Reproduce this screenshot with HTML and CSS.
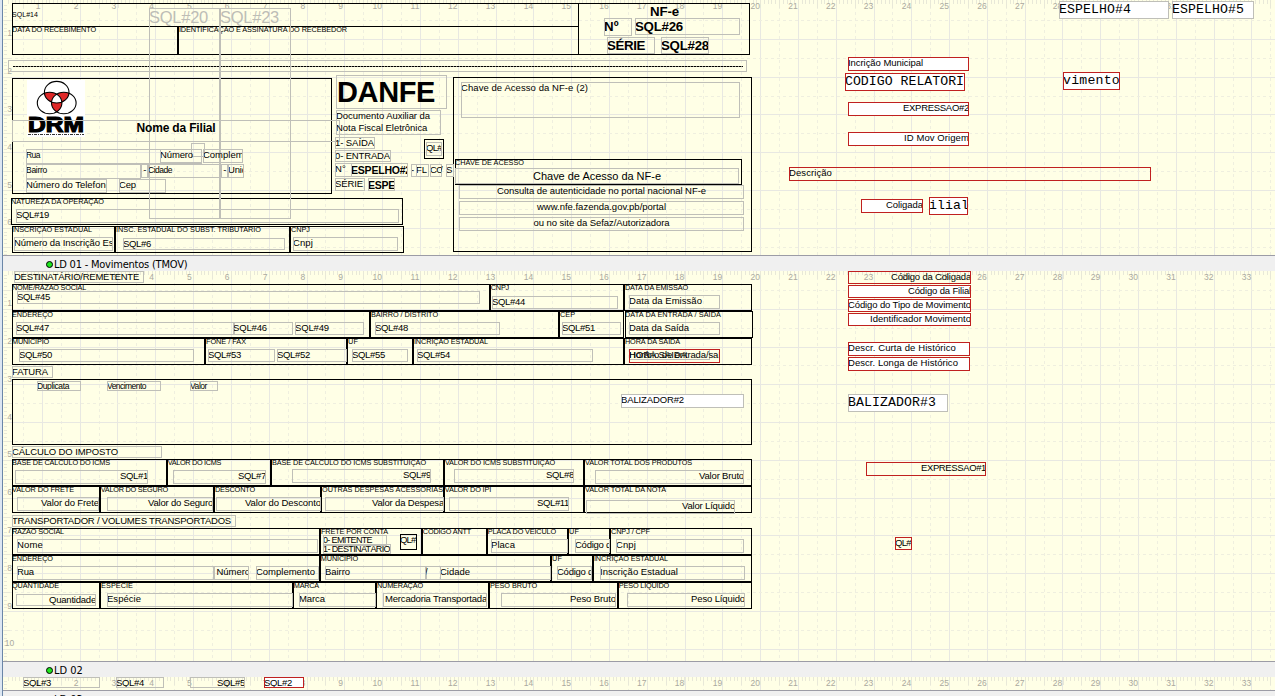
FILE: index.html
```html
<!DOCTYPE html>
<html lang="pt-BR">
<head>
<meta charset="utf-8">
<title>DANFE - Editor de relatório</title>
<link rel="stylesheet" href="styles.css">
</head>
<body>
<div class="designer">
  <div class="edge"></div>
  <main class="bands">
    <section class="band band-header" id="band-header">
      <svg class="logo" viewBox="0 0 58 57" width="58" height="57">
        <defs>
          <clipPath id="clip-top"><ellipse cx="29.7" cy="12.2" rx="12.3" ry="10.8"/></clipPath>
          <clipPath id="clip-left"><ellipse cx="22.6" cy="23" rx="12.3" ry="10.8"/></clipPath>
        </defs>
        <rect width="58" height="57" fill="#fff"/>
        <g fill="#e02828">
          <ellipse cx="22.6" cy="23" rx="12.3" ry="10.8" clip-path="url(#clip-top)"/>
          <ellipse cx="36.8" cy="23" rx="12.3" ry="10.8" clip-path="url(#clip-top)"/>
          <ellipse cx="36.8" cy="23" rx="12.3" ry="10.8" clip-path="url(#clip-left)"/>
        </g>
        <g clip-path="url(#clip-top)"><ellipse cx="36.8" cy="23" rx="12.3" ry="10.8" fill="#fff" clip-path="url(#clip-left)"/></g>
        <g fill="none" stroke="#000" stroke-width="1.1">
          <ellipse cx="29.7" cy="12.2" rx="12.3" ry="10.8"/>
          <ellipse cx="22.6" cy="23" rx="12.3" ry="10.8"/>
          <ellipse cx="36.8" cy="23" rx="12.3" ry="10.8"/>
        </g>
        <text class="logo-text" x="1" y="51.5" textLength="56" lengthAdjust="spacingAndGlyphs">DRM</text>
        <path d="M1 54.5H57" stroke="#333" stroke-dasharray="3 1 1 1"/>
      </svg>
    </section>
    <header class="band-bar"><i class="dot"></i><span class="band-title wide">LD 01 - Movimentos (TMOV)</span></header>
    <section class="band band-mov" id="band-mov"></section>
    <header class="band-bar"><i class="dot"></i><span class="band-title">LD 02</span></header>
    <section class="band band-items" id="band-items"></section>
    <header class="band-bar"><i class="dot low"></i><span class="band-title low">LD 03</span></header>
  </main>
</div>
<script src="script.js"></script>
</body>
</html>
```
FILE: styles.css
```css
* { box-sizing: border-box; }
body {
  margin: 0;
  overflow: hidden;
  background: #ffffe6;
  font-family: "Liberation Sans", Arial, sans-serif;
  color: #000;
}
.designer { display: flex; width: 1275px; height: 696px; overflow: hidden; }
.edge { flex: 0 0 3px; background: #dce6f2; border-right: 1px solid #6a86a8; }
.bands { flex: 1; display: flex; flex-direction: column; min-width: 0; }
.band { position: relative; flex: none; overflow: hidden; background: #ffffe6; }
.band-header { height: 255px; }
.band-mov { height: 390px; }
.band-items { height: 13px; }
.band-bar {
  flex: none;
  display: flex;
  align-items: center;
  gap: 1px;
  height: 16px;
  padding-left: 43px;
  border-top: 1px solid #9c9ca6;
  background: #f0f0f0;
}
.dot { width: 7px; height: 7px; margin-top: 2px; border: 1px solid #000; border-radius: 50%; background: #1ee61e; }
.band-title { font: 11px/15px "DejaVu Sans Condensed", "DejaVu Sans", sans-serif; white-space: pre; padding-top: 1px; }
.band-title.wide { letter-spacing: -0.22px; }
.low { align-self: flex-start; }
.band-title.low { padding-top: 1px; }
.dot.low { margin-top: 5px; }

/* ruler and grid */
.grid { display: block; }
.grid .major { stroke: #e8e8e2; }
.grid .minor { stroke: #efefdf; stroke-dasharray: 3 3; }
.grid .tick { stroke: #e8e8d8; }
.grid text { font-size: 8.5px; fill: #aaa9a0; text-anchor: middle; }

/* items placed on the report canvas */
.logo { position: absolute; left: 24px; top: 80px; }
.logo-text { font: bold 21.5px "Liberation Sans", Arial, sans-serif; stroke: #000; stroke-width: 1.2; }
.item {
  position: absolute;
  display: flex;
  align-items: flex-start;
  overflow: hidden;
  border: 1px solid #bfbfb8;
  font-size: 9.5px;
  line-height: 12px;
  white-space: pre;
}
.item span { flex: none; margin: -1px -1px 0; }
.frame { border-color: #000; font-size: 7.3px; line-height: 7px; }
.red { border-color: #c02020; }
.fill { background: #fff; }
.right { justify-content: flex-end; }
.center { justify-content: center; }
.bare { border-color: transparent; }
.tiny { font-size: 7px; line-height: 10px; }
.small { font-size: 8.5px; line-height: 12px; }
.tight { font-size: 8.5px; line-height: 11px; }
.tight9 { font-size: 9px; line-height: 11px; }
.mono { font: 13.2px/17px "Liberation Mono", "Courier New", monospace; }
.bold { font-weight: bold; font-size: 10.5px; line-height: 15px; }
.head { font-weight: bold; font-size: 13.3px; line-height: 18px; }
.name { font-weight: bold; font-size: 12px; line-height: 17px; }
.danfe { font-weight: bold; font-size: 29px; line-height: 34px; }
.item.danfe span { margin-left: 0; }
.ghost { font-size: 16.5px; line-height: 19px; color: #bdbdb6; }
.mid { font-size: 11px; line-height: 16px; }
.rule { border: 0; background: repeating-linear-gradient(90deg, #000 0 2px, #8a8a80 2px 3px) 0 0 / 100% 1px no-repeat; }
.solid { border-color: #000; }
```
FILE: script.js
```javascript
// Each item: [left, top, right, bottom, text, text width, classes]
const bands = {
  'band-header': { top: 0, height: 255, offset: 1.6, items: [
    [12,3,578,54,'','','frame'],
    [12,26,178,54,'DATA DO RECEBIMENTO',84,'frame cap'],
    [177,26,578,54,' IDENTIFICAÇAO E ASSINATURA DO RECEBEDOR',170,'frame cap'],
    [578,3,749,54,'','','frame'],
    [12,10,60,20,'SQL#14',26,'bare tiny'],
    [8,60,746,71,'','',''],
    [13,66,742,67,'','','rule'],
    [12,78,331,193,'','','frame'],
    [11,198,402,224,'NATUREZA DA OPERAÇAO',93,'frame'],
    [12,226,115,252,'INSCRIÇAO ESTADUAL',80,'frame'],
    [114,226,290,252,' INSC. ESTADUAL DO SUBST. TRIBUTARIO',147,'frame'],
    [289,226,403,252,' CNPJ',21,'frame'],
    [453,77,751,251,'','','frame'],
    [455,159,741,184,'CHAVE DE ACESSO',69,'frame'],
    [424,139,443,158,'','','frame'],
    [149,8,219,218,'SQL#20',59,'ghost'],
    [220,8,290,218,'SQL#23',59,'ghost'],
    [12,120,339,141,'Nome da Filial',79,'name center'],
    [191,143,204,156,'','',''],
    [26,149,201,163,'Rua',14,'small'],
    [160,149,201,162,'Número',33,''],
    [203,149,242,162,'Complemento',59,''],
    [26,164,140,178,'Bairro',21,'small'],
    [141,164,147,177,' -',5,''],
    [148,164,220,177,'Cidade',24,'small'],
    [221,164,227,177,' -',5,''],
    [228,164,243,177,'Unid',19,''],
    [26,179,106,192,'Número do Telefone',85,''],
    [119,179,165,192,'Cep',17,''],
    [16,209,398,222,'SQL#19',33,''],
    [14,237,112,250,'Número da Inscrição Est',102,''],
    [123,238,284,249,'SQL#6',28,''],
    [293,237,397,250,'Cnpj',20,''],
    [604,3,724,17,'NF-e',29,'head center bare'],
    [604,18,631,35,'Nº',15,'head'],
    [635,18,739,34,'SQL#26',48,'head'],
    [607,37,654,53,'SÉRIE',38,'head'],
    [661,37,708,53,'SQL#28',48,'head'],
    [336,75,446,108,'DANFE',98,'danfe'],
    [336,110,440,134,'Documento Auxiliar da\nNota Fiscal Eletrônica',94,''],
    [335,137,374,148,'1- SAÍDA',39,''],
    [335,150,390,161,'0- ENTRADA',55,''],
    [335,163,351,176,'N°',11,''],
    [351,163,407,176,'ESPELHO#2',60,'bold'],
    [411,164,416,176,'-',3,''],
    [416,164,428,176,'FL',11,''],
    [430,164,441,176,'CO',13,''],
    [440,164,447,176,'/',3,'bare'],
    [446,164,453,176,'S',6,''],
    [335,178,364,190,'SÉRIE',28,''],
    [368,178,394,190,'ESPEL',33,'bold'],
    [426,142,441,155,'QL#',16,''],
    [461,82,739,117,'Chave de Acesso da NF-e (2)',127,''],
    [455,168,738,183,'Chave de Acesso da NF-e',128,'mid center'],
    [459,185,743,198,'Consulta de autenticidade no portal nacional NF-e',209,'center'],
    [459,201,743,214,'www.nfe.fazenda.gov.pb/portal',129,'center'],
    [459,217,743,230,'ou no site da Sefaz/Autorizadora',136,'center'],
    [1059,1,1168,18,'ESPELHO#4',72,'mono fill'],
    [1172,1,1253,18,'ESPELHO#5',72,'mono fill'],
    [848,57,968,70,'Incrição Municipal',75,'red fill'],
    [845,73,964,90,'CODIGO RELATORIO',127,'mono red fill'],
    [1063,72,1119,89,'vimento',57,'mono red fill right'],
    [848,102,968,115,'EXPRESSAO#2',66,'red fill right'],
    [848,132,968,145,'ID Mov Origem',65,'red fill right'],
    [789,167,1150,180,'Descrição',43,'red'],
    [861,199,922,212,'Coligada',37,'red fill right'],
    [929,197,967,214,'ilial',40,'mono red fill']
  ]},
  'band-mov': { top: 271, height: 390, offset: 0.4, items: [
    [14,271,143,282,'DESTINATÁRIO/REMETENTE',125,''],
    [12,284,490,310,'NOME/RAZAO SOCIAL',74,'frame'],
    [489,284,624,310,' CNPJ',20,'frame'],
    [623,284,751,310,' DATA DA EMISSAO',65,'frame'],
    [12,311,370,337,'ENDEREÇO',41,'frame'],
    [369,311,559,337,' BAIRRO / DISTRITO',69,'frame'],
    [558,311,623,337,' CEP',17,'frame'],
    [625,311,752,337,'DATA DA ENTRADA / SAIDA',96,'frame'],
    [12,338,205,364,'MUNICIPIO',37,'frame'],
    [204,338,347,364,' FONE / FAX',42,'frame'],
    [346,338,413,364,' UF',12,'frame'],
    [412,338,624,364,' INCRIÇAO ESTADUAL',76,'frame'],
    [623,338,751,364,' HORA DA SAIDA',57,'frame'],
    [17,291,479,303,'SQL#45',33,''],
    [492,296,617,308,'SQL#44',33,''],
    [629,295,719,308,'Data da Emissão',73,''],
    [16,322,234,334,'SQL#47',33,''],
    [233,322,292,334,'SQL#46',34,''],
    [295,322,363,334,'SQL#49',34,''],
    [375,322,499,334,'SQL#48',33,''],
    [562,322,620,334,'SQL#51',33,''],
    [629,322,719,334,'Data da Saída',60,''],
    [19,349,193,361,'SQL#50',33,''],
    [208,349,274,361,'SQL#53',33,''],
    [277,349,346,361,'SQL#52',33,''],
    [352,349,407,361,'SQL#55',33,''],
    [417,349,592,361,'SQL#54',33,''],
    [629,349,709,359,'HORA SAIDA',58,''],
    [629,349,719,362,'Horário de entrada/saída',102,'red'],
    [12,366,52,377,'FATURA',36,''],
    [12,379,751,444,'','','frame'],
    [37,381,80,390,'Duplicata',32,'tight'],
    [107,381,160,390,'Vencimento',39,'tight'],
    [190,381,217,390,'Valor',17,'tight'],
    [621,394,743,407,'BALIZADOR#2',63,'fill'],
    [12,446,161,457,'CÁLCULO DO IMPOSTO',106,''],
    [12,459,167,485,'BASE DE CALCULO DO ICMS',98,'frame'],
    [166,459,271,485,' VALOR DO ICMS',55,'frame'],
    [270,459,444,485,' BASE DE CALCULO DO ICMS SUBSTITUIÇAO',156,'frame'],
    [443,459,584,485,' VALOR DO ICMS SUBSTITUIÇAO',112,'frame'],
    [583,459,751,485,' VALOR TOTAL DOS PRODUTOS',109,'frame'],
    [12,486,100,512,'VALOR DO FRETE',62,'frame'],
    [99,486,214,512,' VALOR DO SEGURO',69,'frame'],
    [213,486,321,512,' DESCONTO',42,'frame'],
    [320,486,444,512,' OUTRAS DESPESAS ACESSORIAS',123,'frame'],
    [443,486,584,512,' VALOR DO IPI',48,'frame'],
    [583,486,751,512,' VALOR TOTAL DA NOTA',83,'frame'],
    [15,470,147,483,'SQL#1',28,'right'],
    [173,470,265,483,'SQL#7',28,'right'],
    [292,469,430,482,'SQL#9',28,'right'],
    [454,469,573,482,'SQL#8',28,'right'],
    [595,470,743,483,'Valor Bruto',45,'right'],
    [17,497,98,510,'Valor do Frete',58,'right'],
    [107,497,212,510,'Valor do Seguro',65,'right'],
    [216,497,320,510,'Valor do Desconto',76,'right'],
    [325,497,443,510,'Valor da Despesa',72,'right'],
    [449,497,568,510,'SQL#11',32,'right'],
    [586,500,734,513,'Valor Líquido',53,'right'],
    [12,515,235,526,'TRANSPORTADOR / VOLUMES TRANSPORTADOS',219,''],
    [12,528,320,554,'RAZAO SOCIAL',52,'frame'],
    [319,528,422,554,' FRETE POR CONTA',69,'frame'],
    [421,528,487,554,' CODIGO ANTT',50,'frame'],
    [486,528,568,554,' PLACA DO VEICULO',70,'frame'],
    [567,528,610,554,' UF',12,'frame'],
    [609,528,751,554,' CNPJ / CPF',41,'frame'],
    [12,555,320,581,'ENDEREÇO',41,'frame'],
    [319,555,551,581,' MUNICIPIO',39,'frame'],
    [550,555,593,581,' UF',12,'frame'],
    [592,555,751,581,' INCRIÇAO ESTADUAL',76,'frame'],
    [12,582,100,608,'QUANTIDADE',47,'frame'],
    [99,582,293,608,' ESPECIE',34,'frame'],
    [292,582,376,608,' MARCA',27,'frame'],
    [375,582,489,608,' NUMERAÇAO',48,'frame'],
    [488,582,618,608,' PESO BRUTO',49,'frame'],
    [617,582,751,608,' PESO LIQUIDO',52,'frame'],
    [17,539,317,552,'Nome',26,''],
    [323,535,386,545,'0- EMITENTE',49,'tight9'],
    [323,544,390,553,'1- DESTINATÁRIO',67,'tight9'],
    [400,534,416,549,'QL#1',20,'solid'],
    [491,539,567,552,'Placa',24,''],
    [575,539,609,552,'Código do',41,''],
    [616,539,743,552,'Cnpj',20,''],
    [17,566,213,579,'Rua',17,''],
    [214,566,248,579,' Número',36,''],
    [256,566,318,579,'Complemento',59,''],
    [325,566,426,579,'Bairro',25,''],
    [425,566,440,579,'/',3,''],
    [440,566,550,579,'Cidade',30,''],
    [557,566,591,579,'Código do',41,''],
    [600,566,744,579,'Inscrição Estadual',78,''],
    [16,594,95,605,'Quantidade',47,'right'],
    [107,593,292,606,'Espécie',34,''],
    [299,593,375,606,'Marca',26,''],
    [383,593,486,606,'Mercadoria Transportada',102,'right'],
    [501,593,615,606,'Peso Bruto',46,'right'],
    [627,593,744,606,'Peso Líquido',54,'right'],
    [848,271,970,283,'Código da Coligada',80,'red right'],
    [848,285,970,297,'Código da Filial',63,'red fill right'],
    [848,299,970,311,'Código do Tipo de Movimento',123,'red fill right'],
    [848,313,970,325,'Identificador Movimento',101,'red fill right'],
    [848,342,969,355,'Descr. Curta de Histórico',108,'red fill'],
    [848,357,969,370,'Descr. Longa de Histórico',110,'red fill'],
    [848,394,947,411,'BALIZADOR#3',88,'mono fill'],
    [866,462,985,475,'EXPRESSAO#1',65,'red right'],
    [895,537,911,549,'QL#',16,'red']
  ]},
  'band-items': { top: 677, height: 13, offset: 0.4, items: [
    [23,677,99,687,'SQL#3',28,''],
    [116,677,163,687,'SQL#4',28,''],
    [190,677,244,687,'SQL#5',28,'right'],
    [264,677,303,687,'SQL#2',28,'red fill']
  ]}
};

const LEFT = 3;      // canvas starts after the window edge
const CM = 37.8;     // pixels per centimetre
const WIDTH = 1272;

function drawGrid(height, offset) {
  let out = '';
  const line = (x1, y1, x2, y2, cls) =>
    `<line class="${cls}" x1="${x1}" y1="${y1}" x2="${x2}" y2="${y2}"/>`;
  for (let n = 0; n <= 34; n++) {
    const x = Math.floor(4.6 - LEFT + n * CM) + 0.5;
    const half = Math.floor(4.6 - LEFT + (n + 0.5) * CM) + 0.5;
    if (n) out += line(x, 0, x, height, 'major');
    out += line(half, 0, half, height, 'minor');
  }
  for (let n = 0; n * CM < height; n++) {
    const y = Math.floor(offset + n * CM) + 0.5;
    const half = Math.floor(offset + (n + 0.5) * CM) + 0.5;
    if (n) out += line(0, y, WIDTH, y, 'major');
    out += line(0, half, WIDTH, half, 'minor');
  }
  for (let n = 1; n < 336; n++) {
    const x = Math.floor(1.6 + n * CM / 10) + 0.5;
    out += line(x, 0, x, n % 5 ? 4 : 8, 'tick');
  }
  for (let n = 1; n * CM / 10 < height; n++) {
    const y = Math.floor(offset + n * CM / 10) + 0.5;
    out += line(1, y, n % 5 ? 4 : 7, y, 'tick');
  }
  for (let n = 1; n <= 33; n++) {
    out += `<text x="${n * CM - (n < 10 ? 2.6 : 3.8)}" y="9">${n}</text>`;
  }
  for (let n = 1; n * CM < height; n++) out += `<text x="6.5" y="${offset + n * CM - 3}">${n}</text>`;
  return `<svg class="grid" width="${WIDTH}" height="${height}">${out}</svg>`;
}

for (const [id, band] of Object.entries(bands)) {
  const host = document.getElementById(id);
  host.insertAdjacentHTML('afterbegin', drawGrid(band.height, band.offset));
  for (const [l, t, r, b, text, textWidth, cls] of band.items) {
    const box = document.createElement('div');
    box.className = 'item ' + cls;
    box.style.cssText = `left:${l - LEFT}px;top:${t - band.top}px;width:${r - l + 1}px;height:${b - t + 1}px`;
    host.append(box);
    if (!text) continue;
    const span = document.createElement('span');
    span.textContent = text;
    box.append(span);
    const longest = Math.max(...text.split('\n').map(s => s.length));
    const spacing = (textWidth - span.getBoundingClientRect().width) / longest;
    span.style.letterSpacing = spacing.toFixed(3) + 'px';
  }
}
```
